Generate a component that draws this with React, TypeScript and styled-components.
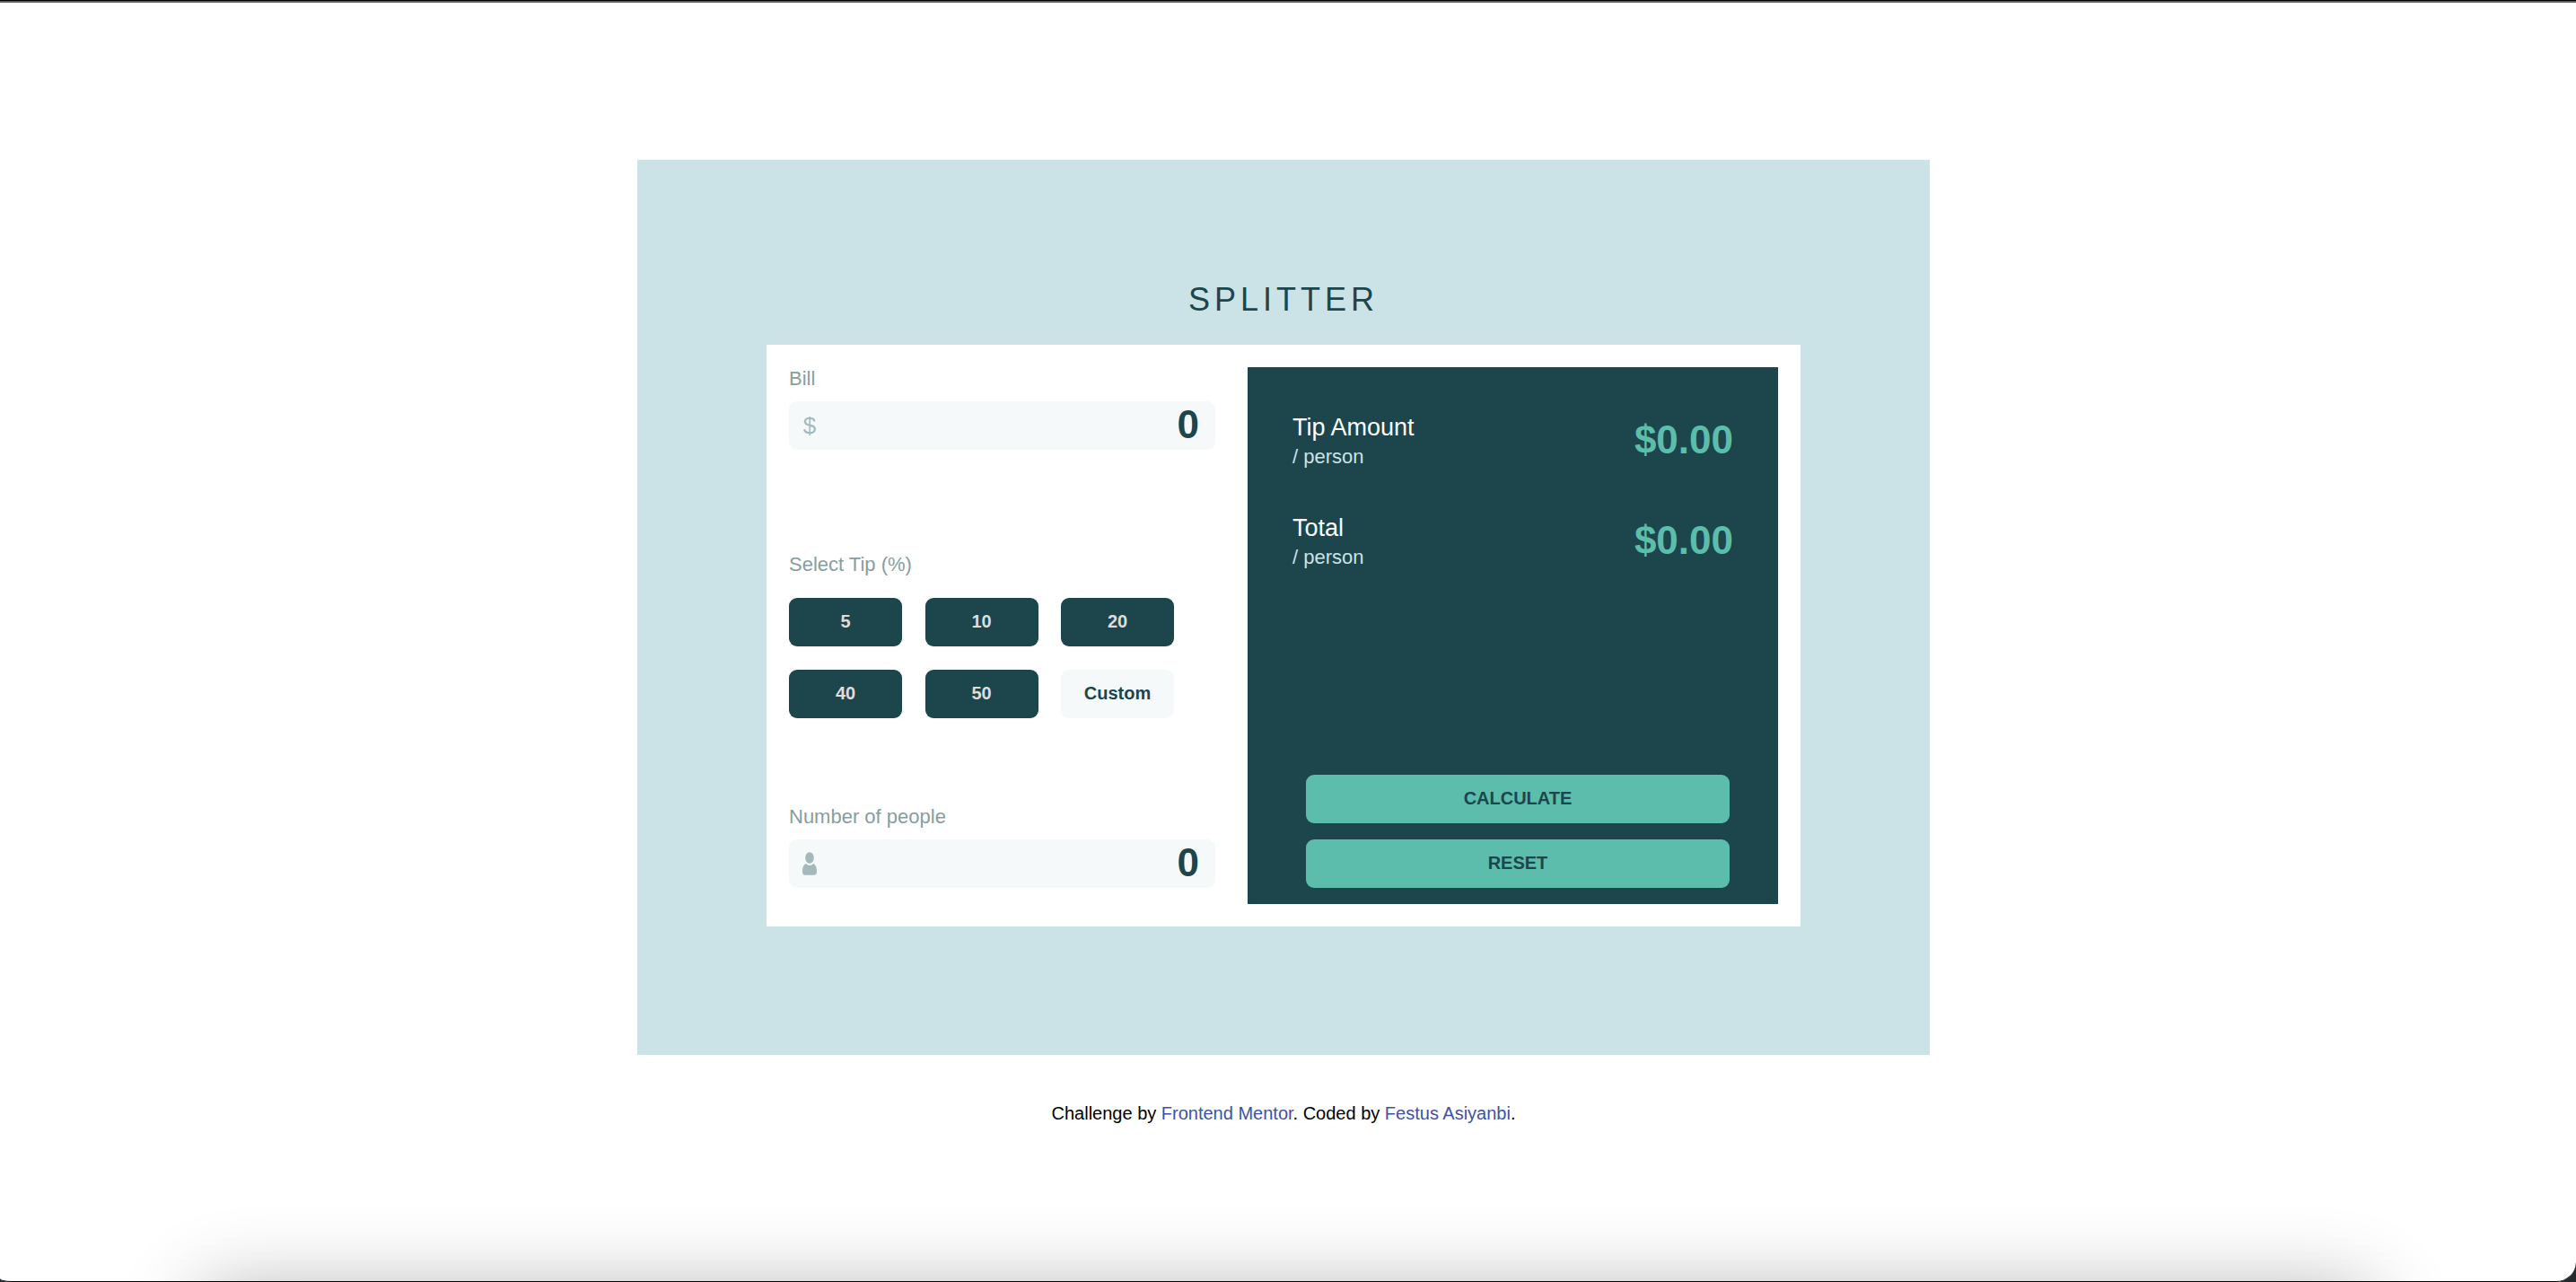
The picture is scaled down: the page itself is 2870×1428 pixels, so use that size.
import React, { useState } from "react";
import styled, { createGlobalStyle } from "styled-components";

const color = {
  pale: "#cbe3e6",
  dark: "#1c464c",
  mint: "#5dbdac",
  field: "#f5f9fa",
  label: "#869ea0",
  icon: "#a3b9bc",
};

const GlobalStyle = createGlobalStyle`
  *, *::before, *::after { box-sizing: border-box; }
  body {
    margin: 0;
    background: #fff;
    font-family: "Liberation Sans", Arial, Helvetica, sans-serif;
    font-size: 22px;
    line-height: 26px;
  }
`;

const Page = styled.div`
  min-height: 100vh;
  display: flex;
  flex-direction: column;
  align-items: center;
  padding: 178px 10px 0 0;
  overflow: hidden;
`;

const TopEdge = styled.div`
  position: fixed;
  inset: 0 0 auto;
  height: 3px;
  background: #5f5d60;
  border-top: 1px solid #000;
`;

const WindowFrame = styled.div`
  position: fixed;
  inset: 0;
  pointer-events: none;
  border-bottom: 1px solid #000;
  border-radius: 0 0 22px 12px / 0 0 22px 4px;
  box-shadow: 0 0 0 20px #23282b;
`;

const DockShadow = styled.div`
  position: fixed;
  top: 100%;
  left: 220px;
  right: 225px;
  height: 120px;
  border-radius: 30px;
  pointer-events: none;
  box-shadow: 0 8px 88px rgba(0, 0, 0, 0.3);
`;

const Stage = styled.main`
  width: 100%;
  max-width: 1440px;
  display: flex;
  flex-direction: column;
  align-items: center;
  gap: 29px;
  padding: 135px 0 143px;
  background: ${color.pale};
`;

const Title = styled.h1`
  margin: 0;
  font-size: 36px;
  font-weight: 400;
  line-height: 42px;
  letter-spacing: 5px;
  color: ${color.dark};
`;

const Card = styled.form`
  width: 80%;
  display: grid;
  grid-template-columns: minmax(0, 475fr) minmax(0, 591fr);
  column-gap: 36px;
  padding: 25px;
  background: #fff;
`;

const Inputs = styled.div`
  display: flex;
  flex-direction: column;
  justify-content: space-between;
`;

const Field = styled.div`
  display: flex;
  flex-direction: column;
  gap: 12px;
  padding-bottom: 18px;
`;

const Label = styled.label`
  color: ${color.label};
`;

const InputBox = styled.div`
  display: flex;
  align-items: center;
  height: 54px;
  padding: 0 18px 0 14px;
  border-radius: 9px;
  background: ${color.field};
  color: ${color.icon};
`;

const Currency = styled.span`
  width: 18px;
  text-align: center;
  font-size: 26px;
`;

const PersonIcon = styled.svg`
  width: 18px;
  height: 26px;
  fill: currentColor;
`;

const NumberInput = styled.input`
  flex: 1;
  min-width: 0;
  height: 100%;
  padding: 0 0 2px;
  border: 0;
  outline: 0;
  background: transparent;
  text-align: right;
  font: 700 44px "Liberation Sans", Arial, sans-serif;
  color: ${color.dark};
`;

const TipGroup = styled.fieldset`
  margin: 0;
  padding: 0;
  border: 0;
`;

const TipLegend = styled.legend`
  padding: 0;
  margin-bottom: 24px;
  color: ${color.label};
`;

const TipGrid = styled.div`
  max-width: 429px;
  display: grid;
  grid-template-columns: repeat(3, 126px);
  justify-content: space-between;
  row-gap: 26px;
`;

const Button = styled.button`
  height: 54px;
  padding: 0 0 2px;
  border: 0;
  border-radius: 9px;
  font: 700 20px "Liberation Sans", Arial, sans-serif;
  cursor: pointer;
`;

const TipButton = styled(Button)<{ $light?: boolean }>`
  background: ${(p) => (p.$light ? color.field : color.dark)};
  color: ${(p) => (p.$light ? color.dark : "#dfdcdc")};
`;

const Panel = styled.section`
  min-height: 598px;
  display: flex;
  flex-direction: column;
  justify-content: space-between;
  padding: 51px 50px 18px;
  background: ${color.dark};
`;

const Results = styled.div`
  display: flex;
  flex-direction: column;
  gap: 50px;
`;

const ResultRow = styled.div`
  display: flex;
  justify-content: space-between;
  align-items: center;
`;

const ResultLabel = styled.div`
  display: flex;
  flex-direction: column;
  gap: 4px;
`;

const ResultName = styled.span`
  font-size: 27px;
  line-height: 32px;
  color: #fff;
`;

const PerPerson = styled.span`
  color: ${color.pale};
`;

const Amount = styled.output`
  font-size: 44px;
  font-weight: 700;
  line-height: 60px;
  padding-bottom: 2px;
  color: ${color.mint};
`;

const Actions = styled.div`
  display: flex;
  flex-direction: column;
  gap: 18px;
  padding: 0 4px 0 15px;
`;

const ActionButton = styled(Button)`
  background: ${color.mint};
  color: ${color.dark};
  text-transform: uppercase;
`;

const Footer = styled.footer`
  margin-top: 53px;
  font-size: 20px;
  line-height: 24px;
  color: #000;
`;

const FooterLink = styled.a`
  color: #3e52a3;
  text-decoration: none;
`;

function Result({ name, value }: { name: string; value: number }) {
  return (
    <ResultRow>
      <ResultLabel>
        <ResultName>{name}</ResultName>
        <PerPerson>/ person</PerPerson>
      </ResultLabel>
      <Amount aria-label={name}>${value.toFixed(2)}</Amount>
    </ResultRow>
  );
}

export default function App() {
  const [bill, setBill] = useState("0");
  const [people, setPeople] = useState("0");
  const [tip, setTip] = useState(0);
  const [result, setResult] = useState({ tip: 0, total: 0 });

  const calculate = (event: React.FormEvent) => {
    event.preventDefault();
    const count = Number(people);
    const amount = Number(bill);
    if (!(count > 0) || Number.isNaN(amount)) return;
    const tipTotal = (amount * tip) / 100;
    setResult({ tip: tipTotal / count, total: (amount + tipTotal) / count });
  };

  const reset = () => {
    setBill("0");
    setPeople("0");
    setTip(0);
    setResult({ tip: 0, total: 0 });
  };

  const chooseCustom = () => {
    const answer = Number(window.prompt("Custom", String(tip)));
    if (answer >= 0) setTip(answer);
  };

  return (
    <>
      <GlobalStyle />
      <Page>
        <Stage>
          <Title>SPLITTER</Title>
          <Card onSubmit={calculate}>
            <Inputs>
              <Field>
                <Label htmlFor="bill">Bill</Label>
                <InputBox>
                  <Currency aria-hidden="true">$</Currency>
                  <NumberInput
                    id="bill"
                    inputMode="decimal"
                    value={bill}
                    onChange={(e) => setBill(e.target.value)}
                  />
                </InputBox>
              </Field>
              <TipGroup>
                <TipLegend>Select Tip (%)</TipLegend>
                <TipGrid>
                  {[5, 10, 20, 40, 50].map((value) => (
                    <TipButton key={value} type="button" onClick={() => setTip(value)}>
                      {value}
                    </TipButton>
                  ))}
                  <TipButton $light type="button" onClick={chooseCustom}>
                    Custom
                  </TipButton>
                </TipGrid>
              </TipGroup>
              <Field>
                <Label htmlFor="people">Number of people</Label>
                <InputBox>
                  <PersonIcon viewBox="0 0 18 26" aria-hidden="true">
                    <ellipse cx="9" cy="6.5" rx="4.8" ry="6.2" />
                    <path d="M5 12.9C6 14 7.4 14.9 9 14.9s3-.9 4-2c2.8 1 4 4.3 4 9.1 0 2.6-1 3.7-3.200 3.700H4.200C2 25.700 1 24.600 1 22c0-4.800 1.200-8.100 4-9.100z" />
                  </PersonIcon>
                  <NumberInput
                    id="people"
                    inputMode="numeric"
                    value={people}
                    onChange={(e) => setPeople(e.target.value)}
                  />
                </InputBox>
              </Field>
            </Inputs>
            <Panel>
              <Results>
                <Result name="Tip Amount" value={result.tip} />
                <Result name="Total" value={result.total} />
              </Results>
              <Actions>
                <ActionButton type="submit">Calculate</ActionButton>
                <ActionButton type="button" onClick={reset}>
                  Reset
                </ActionButton>
              </Actions>
            </Panel>
          </Card>
        </Stage>
        <Footer>
          Challenge by <FooterLink href="https://www.frontendmentor.io">Frontend Mentor</FooterLink>. Coded by{" "}
          <FooterLink href="#">Festus Asiyanbi</FooterLink>.
        </Footer>
      </Page>
      <DockShadow />
      <TopEdge />
      <WindowFrame />
    </>
  );
}
